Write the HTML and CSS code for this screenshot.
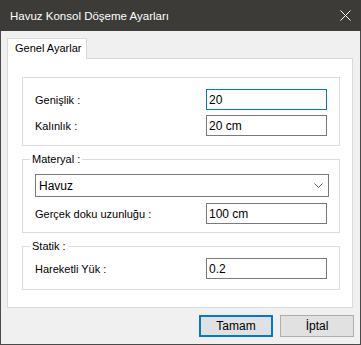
FILE: index.html
```html
<!DOCTYPE html>
<html lang="tr">
<head>
  <meta charset="UTF-8">
  <title>Havuz Konsol Döşeme Ayarları</title>
  <link rel="stylesheet" href="styles.css">
</head>
<body>
  <div class="window">
    <div class="titlebar">
      <span class="title">Havuz Konsol Döşeme Ayarları</span>
      <svg class="close" width="11" height="11" viewBox="0 0 11 11">
        <path d="M0.5 0.5L10.5 10.5M10.5 0.5L0.5 10.5" stroke="#ffffff" stroke-width="1" fill="none" />
      </svg>
    </div>

    <div class="client">
      <div class="tabs">
        <div class="tab active">Genel Ayarlar</div>
      </div>

      <div class="tab-panel">
        <!-- Boyutlar -->
        <div class="group group-size">
          <div class="row">
            <label class="label">Genişlik :</label>
            <input class="field focused" type="text" value="20">
          </div>
          <div class="row">
            <label class="label">Kalınlık :</label>
            <input class="field" type="text" value="20 cm">
          </div>
        </div>

        <!-- Materyal -->
        <div class="group group-material">
          <span class="legend">Materyal :</span>
          <div class="combo">
            <span>Havuz</span>
            <svg width="9" height="5" viewBox="0 0 9 5">
              <path d="M0.5 0.5L4.5 4.5L8.5 0.5" stroke="#555555" stroke-width="1" fill="none" />
            </svg>
          </div>
          <div class="row">
            <label class="label">Gerçek doku uzunluğu :</label>
            <input class="field" type="text" value="100 cm">
          </div>
        </div>

        <!-- Statik -->
        <div class="group group-static">
          <span class="legend">Statik :</span>
          <div class="row">
            <label class="label">Hareketli Yük :</label>
            <input class="field" type="text" value="0.2">
          </div>
        </div>
      </div>

      <div class="buttons">
        <button class="btn btn-default">Tamam</button>
        <button class="btn">İptal</button>
      </div>
    </div>
  </div>
</body>
</html>
```

FILE: styles.css
```css
body {
  margin: 0;
  padding: 0;
  font-family: "Liberation Sans", Arial, sans-serif;
  font-size: 11px;
  color: #000000;
  background: #f0f0f0;
}

.window {
  width: 361px;
  height: 345px;
  display: flex;
  flex-direction: column;
}

.titlebar {
  height: 31px;
  flex-shrink: 0;
  background: #3c3b38;
  color: #ffffff;
  display: flex;
  align-items: center;
  justify-content: space-between;
  padding: 0 10px 0 10px;
  box-sizing: border-box;
}

.title {
  font-size: 11.5px;
  margin-top: 1px;
}

.close {
  display: block;
}

.client {
  flex: 1;
  background: #f0f0f0;
  border: 1px solid #4a4a4a;
  border-top: none;
  padding: 7px 7px 0 6px;
  display: flex;
  flex-direction: column;
}

.tabs {
  display: flex;
  height: 20px;
}

.tab {
  position: relative;
  z-index: 1;
  height: 21px;
  box-sizing: border-box;
  padding: 0 5px 0 7px;
  line-height: 19px;
  background: #ffffff;
  border: 1px solid #d9d9d9;
  border-bottom: none;
}

.tab-panel {
  height: 250px;
  box-sizing: border-box;
  background: #ffffff;
  border: 1px solid #d9d9d9;
  padding-top: 18px;
}

.group {
  position: relative;
  width: 318px;
  margin-left: 14px;
  box-sizing: border-box;
  border: 1px solid #dcdcdc;
  padding-left: 12px;
  display: flex;
  flex-direction: column;
}

.group-size {
  padding-top: 11px;
  padding-bottom: 9px;
  gap: 5px;
}

.group-material {
  margin-top: 13px;
  padding-top: 14px;
  padding-bottom: 8px;
  gap: 6px;
}

.group-static {
  margin-top: 13px;
  padding-top: 11px;
  padding-bottom: 10px;
}

.legend {
  position: absolute;
  top: -8px;
  left: 7px;
  padding: 0 2px;
  line-height: 14px;
  background: #ffffff;
}

.row {
  display: flex;
  align-items: center;
  height: 21px;
}

.label {
  width: 171px;
  margin-top: 1px;
}

.field {
  width: 121px;
  height: 21px;
  box-sizing: border-box;
  margin: 0;
  padding: 0 2px;
  border: 1px solid #7a7a7a;
  font-family: inherit;
  font-size: 12px;
  color: #000000;
  background: #ffffff;
  outline: none;
}

.field.focused {
  border-color: #0078d7;
}

.combo {
  width: 294px;
  height: 23px;
  box-sizing: border-box;
  border: 1px solid #7a7a7a;
  padding: 0 5px 0 3px;
  display: flex;
  align-items: center;
  justify-content: space-between;
  font-size: 12px;
}

.buttons {
  display: flex;
  justify-content: flex-end;
  gap: 7px;
  margin-top: 7px;
  margin-right: -1px;
}

.btn {
  width: 74px;
  height: 22px;
  box-sizing: border-box;
  margin: 0;
  padding: 0;
  background: #e1e1e1;
  border: 1px solid #adadad;
  font-family: inherit;
  font-size: 12px;
  color: #000000;
}

.btn-default {
  border: 2px solid #0078d7;
}
```
